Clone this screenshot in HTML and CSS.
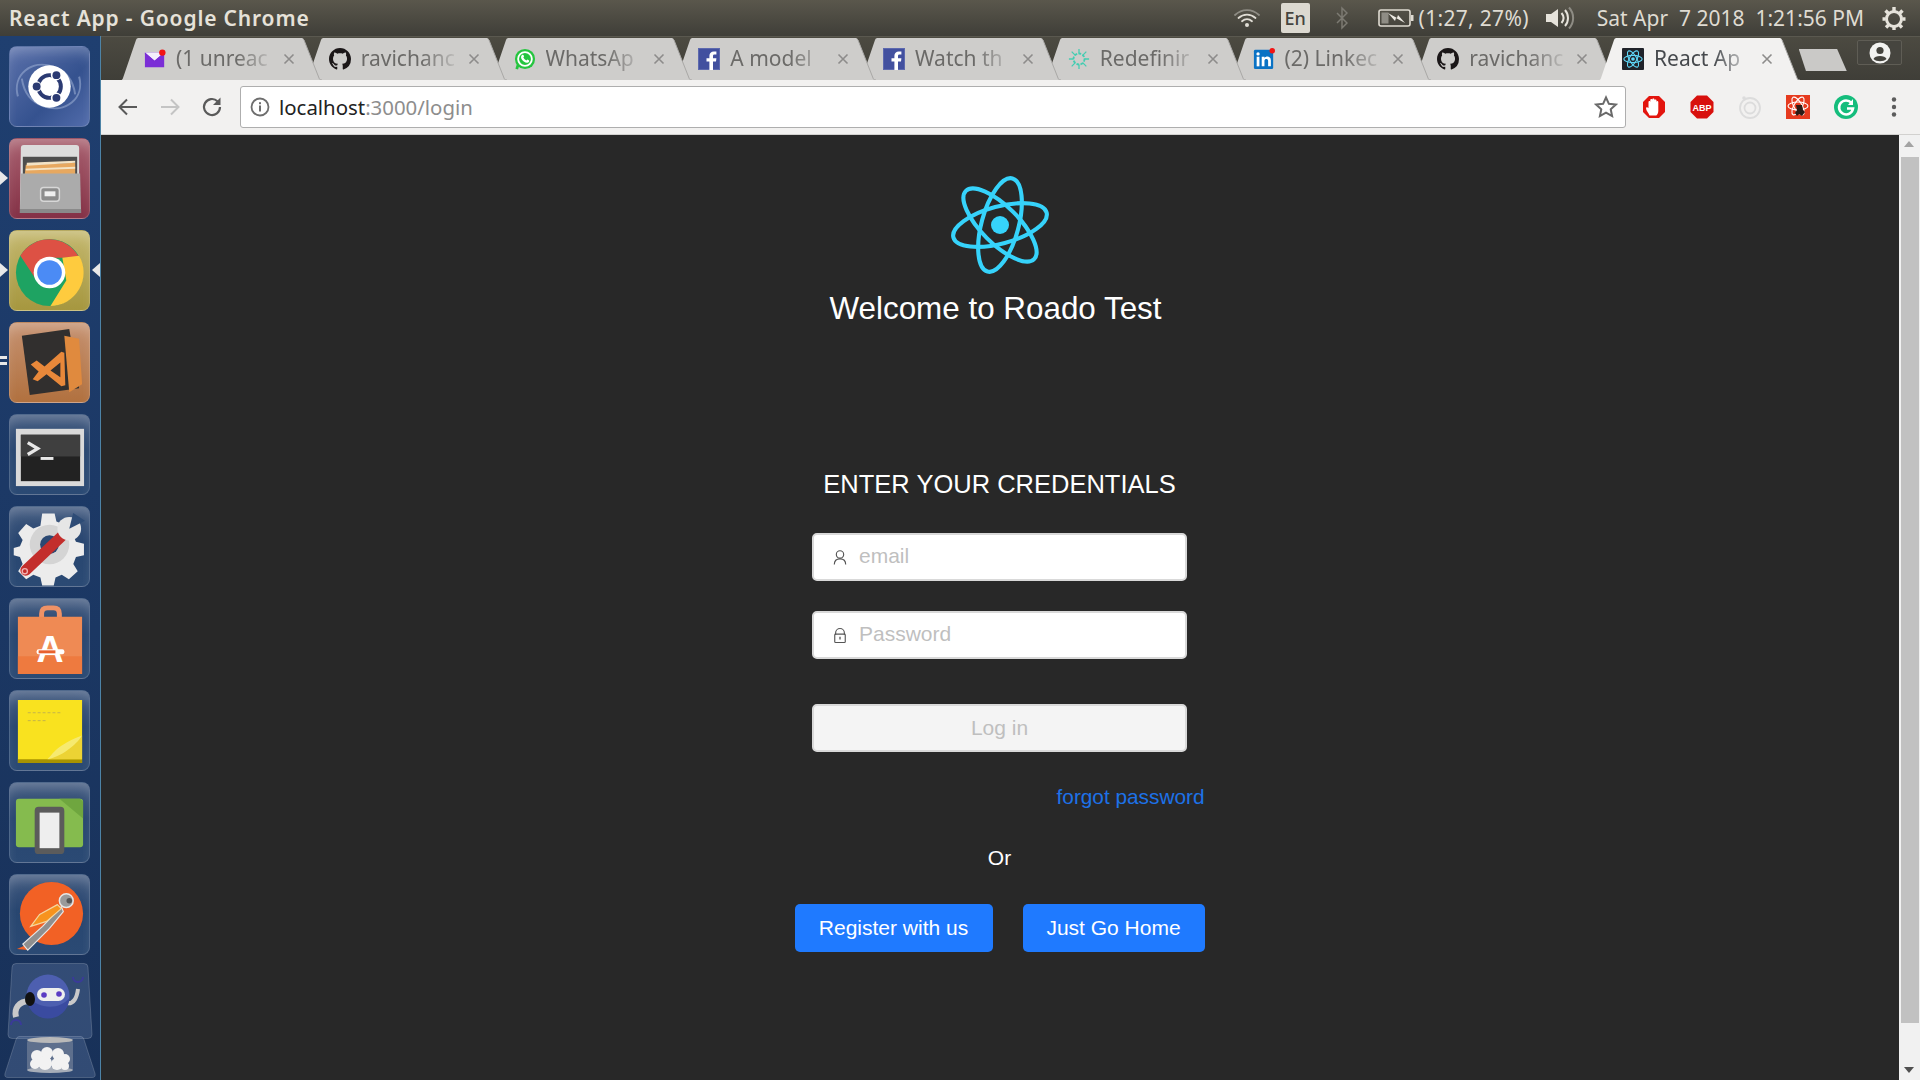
FILE: index.html
```html
<!DOCTYPE html>
<html lang="en">
<head>
<meta charset="utf-8">
<title>React App</title>
<link rel="stylesheet" href="styles.css">
</head>
<body>
<svg class="defs" width="0" height="0">
  <defs>
    <symbol id="i-gh" viewBox="0 0 16 16"><path fill="#1b1718" d="M8 0C3.58 0 0 3.58 0 8c0 3.54 2.29 6.53 5.47 7.59.4.07.55-.17.55-.38 0-.19-.01-.82-.01-1.49-2.01.37-2.53-.49-2.69-.94-.09-.23-.48-.94-.82-1.13-.28-.15-.68-.52-.01-.53.63-.01 1.08.58 1.23.82.72 1.21 1.87.87 2.33.66.07-.52.28-.87.51-1.07-1.78-.2-3.64-.89-3.64-3.95 0-.87.31-1.59.82-2.15-.08-.2-.36-1.02.08-2.12 0 0 .67-.21 2.2.82.64-.18 1.32-.27 2-.27.68 0 1.36.09 2 .27 1.53-1.04 2.2-.82 2.2-.82.44 1.1.16 1.92.08 2.12.51.56.82 1.27.82 2.15 0 3.07-1.87 3.75-3.65 3.95.29.25.54.73.54 1.48 0 1.07-.01 1.93-.01 2.2 0 .21.15.46.55.38A8.013 8.013 0 0016 8c0-4.42-3.58-8-8-8z"/></symbol>
    <symbol id="i-fb" viewBox="0 0 22 22"><rect width="22" height="22" fill="#42509f"/><rect x=".5" y=".5" width="21" height="21" fill="none" stroke="#5d69ae"/><path fill="#fff" d="M15 22v-8.500h3l.4-3.300H15V8.100c0-1 .3-1.600 1.600-1.600h1.800V3.500c-.4 0-1.400-.1-2.600-.1-2.600 0-4.400 1.600-4.400 4.400v2.400H8.500v3.300h2.900V22z"/></symbol>
    <symbol id="i-close" viewBox="0 0 12 12"><path d="M1.500 1.500l9 9M10.500 1.500l-9 9" fill="none" stroke="#8d8c8b" stroke-width="1.600"/></symbol>
    <symbol id="i-tab" viewBox="0 0 204 42" preserveAspectRatio="none"><path d="M0 42h3c1 0 1.500-.5 2-2L18 2c.5-1.200 1-2 2.500-2h163c1.500 0 2 .8 2.500 2l15 38c.5 1.500 1 2 2 2h1z" fill="currentColor"/><path d="M186 2l15 38c.5 1.500 1 2 3 2" fill="none" stroke="#a9a8a6"/></symbol>
  </defs>
</svg>

<header class="topbar">
  <div class="window-title">React App - Google Chrome</div>
  <div class="indicators">
    <svg class="ind-wifi" width="26" height="20" viewBox="0 0 26 20"><g fill="none" stroke-linecap="round"><path d="M1 7c7-6.500 17-6.500 24 0" stroke="#8e8c84" stroke-width="1.800"/><path d="M4.500 10c5-4.500 12-4.500 17 0" stroke="#e0ddd5" stroke-width="1.800"/><path d="M8 13.200c3-2.600 7-2.600 10 0" stroke="#e0ddd5" stroke-width="1.800"/></g><circle cx="13" cy="17" r="2" fill="#e0ddd5"/></svg>
    <div class="ind-lang">En</div>
    <svg class="ind-bt" width="12" height="24" viewBox="0 0 12 24"><path d="M1 7l10 10-5 5V2l5 5L1 17" fill="none" stroke="#7c7a72" stroke-width="1.500"/></svg>
    <div class="ind-battery">
      <svg width="36" height="20" viewBox="0 0 36 20"><rect x="1" y="2" width="31" height="16" rx="2" fill="none" stroke="#dfdbd2" stroke-width="1.600"/><rect x="33" y="7" width="2.500" height="6" fill="#dfdbd2"/><rect x="3.500" y="4.500" width="7" height="11" fill="#8f8d85"/><path d="M10 5l9 5 1-3 7 8-9-5-1 3z" fill="#eeebe4"/></svg>
      <span class="battery-text">(1:27, 27%)</span>
    </div>
    <svg class="ind-vol" width="30" height="24" viewBox="0 0 30 24"><path d="M1 8h5l7-5v18l-7-5H1z" fill="#e6e3db"/><g fill="none" stroke-width="2"><path d="M16.500 7c2.500 3 2.500 7 0 10" stroke="#e6e3db"/><path d="M20 4c4 4.500 4 11.500 0 16" stroke="#e6e3db"/><path d="M24 1.500c5.500 6 5.500 15 0 21" stroke="#8e8c84"/></g></svg>
    <div class="ind-clock">Sat Apr&nbsp; 7 2018&nbsp; 1:21:56 PM</div>
    <svg class="ind-gear" width="26" height="26" viewBox="0 0 26 26"><g fill="none" stroke="#e6e3db"><circle cx="13" cy="14" r="7.500" stroke-width="3"/><path d="M13 2v5M4.500 5.500l3 3M21.500 5.500l-3 3M1.500 14h3M21.500 14h3M5 22.500l2.500-2.500M21 22.500L18.500 20M13 22v3" stroke-width="3.400"/></g></svg>
  </div>
</header>

<div class="desktop">
  <nav class="launcher">
    <div class="tile tile-dash">
      <svg viewBox="0 0 80 80"><g fill="none" stroke="#9fb0d6" stroke-opacity=".55" stroke-width="2"><path d="M8 50c-6-22 14-38 36-30 12 4 20 14 22 28"/><path d="M70 30c6 22-14 38-36 30-12-4-20-14-22-28"/></g><circle cx="40" cy="40" r="21.500" fill="#fff"/><circle cx="40" cy="40" r="11.500" fill="none" stroke="#2b3a72" stroke-width="4"/><circle cx="26.500" cy="40" r="5.500" fill="#fff"/><circle cx="46.800" cy="28.300" r="5.500" fill="#fff"/><circle cx="46.800" cy="51.700" r="5.500" fill="#fff"/><circle cx="27" cy="40" r="4" fill="#2b3a72"/><circle cx="47" cy="28.500" r="4" fill="#2b3a72"/><circle cx="47" cy="51.500" r="4" fill="#2b3a72"/></svg>
    </div>
    <div class="tile tile-files">
      <svg viewBox="0 0 80 80"><path d="M11 9q0-3 3-3h53q3 0 3 3v62H10z" fill="#dcdcdc"/><rect x="13" y="18" width="55" height="20" fill="#4d4d4d"/><path d="M16 26l50-2v12H15z" fill="#e7a860"/><path d="M17 24l49-2v2l-49 3zM16 30l50-2v2l-50 2z" fill="#f3e3c5"/><path d="M11 35h60l1 40H10z" fill="#ababab"/><path d="M10 71h62v4H10z" fill="#8a8a8a"/><rect x="31" y="49" width="19" height="14" rx="3" fill="#8c8c8c" stroke="#d7d7d7" stroke-width="1.500"/><rect x="35" y="53" width="11" height="5" fill="#efefef"/></svg>
    </div>
    <div class="tile tile-chrome">
      <svg viewBox="0 0 80 80"><circle cx="40" cy="42" r="34" fill="#1ea362"/><path d="M10.500 25A34 34 0 0 1 70 27L40 27 27 50z" fill="#dd5144"/><path d="M70 25a34 34 0 0 1-29 51l16-26-4-23z" fill="#fecb3e"/><circle cx="40" cy="42" r="16" fill="#fff"/><circle cx="40" cy="42" r="12.500" fill="#4b8bf5"/></svg>
    </div>
    <div class="tile tile-code">
      <svg viewBox="0 0 80 80"><path d="M12 13l48-7 10 60-50 7z" fill="#312f2e"/><path d="M55 13l15 3 3 46-13 8z" fill="#e08a3e"/><path d="M21 42l6-4 8 6 17-15 3 1 1 33-4 1-15-12-9 7-5-2 6-8zm30-2l-10 8 10 7z" fill="#e8883a"/></svg>
    </div>
    <div class="tile tile-glass">
      <svg viewBox="0 0 80 80"><rect x="6" y="14" width="69" height="58" fill="#dadada"/><rect x="11" y="20" width="60" height="47" fill="#222"/><rect x="11" y="20" width="60" height="22" fill="#3f3f3f"/><path d="M18 28l10 6-10 6" fill="none" stroke="#e8e8e8" stroke-width="3.400"/><path d="M31 44h13" stroke="#e8e8e8" stroke-width="3"/></svg>
    </div>
    <div class="tile tile-glass">
      <svg viewBox="0 0 80 80"><path d="M34 5h14l2 9 7 3 8-5 9 10-5 8 3 7 9 2v13l-9 2-3 8 5 8-10 9-8-5-7 3-2 9H34l-2-9-8-3-8 5-9-9 5-8-3-8-7-2V44l7-2 3-7-5-8 9-10 8 5 8-3z" fill="#ececec" transform="translate(2 2) scale(.9)"/><circle cx="40" cy="38" r="20" fill="#d4d4d4"/><circle cx="40" cy="38" r="9.500" fill="#2a4872"/><path d="M16 64L52 30" stroke="#c32e2c" stroke-width="11" stroke-linecap="round"/><circle cx="15" cy="65" r="2.600" fill="none" stroke="#f0b0b0" stroke-width="1.400"/><circle cx="60" cy="22" r="12" fill="#e6e6e6"/><path d="M60 22l4-16 12 8z" fill="#2e4c76"/></svg>
    </div>
    <div class="tile tile-glass">
      <svg viewBox="0 0 80 80"><path d="M32 22v-7q0-6 6-6h6q6 0 6 6v7" fill="none" stroke="#ef9266" stroke-width="5"/><path d="M8 18h65v58H8z" fill="#ef8a54"/><path d="M8 58h65v18H8z" fill="#ee7a3f"/><text x="40.500" y="64" class="bag-a">A</text><rect x="27" y="51" width="28" height="5" rx="2" fill="#fff"/><rect x="29" y="52" width="17" height="3" fill="#e8622f"/></svg>
    </div>
    <div class="tile tile-glass">
      <svg viewBox="0 0 80 80"><path d="M8 9h65v64H8z" fill="#f9e21f"/><path d="M8 69h65v4H8z" fill="#a89300"/><path d="M38 69c12-2 28-14 35-24v24z" fill="#ecd334"/><path d="M38 69c6-6 9-14 35-24-6 10-22 22-35 24z" fill="#f6ea70"/><path d="M18 22h34M18 30h18" stroke="#c4b44a" stroke-width="1" stroke-dasharray="3 2"/></svg>
    </div>
    <div class="tile tile-glass">
      <svg viewBox="0 0 80 80"><rect x="6" y="16" width="68" height="49" rx="3" fill="#85bb4e"/><path d="M50 16h21l3 3v17z" fill="#6fa63f"/><rect x="25" y="24" width="30" height="48" rx="4" fill="#5b5b5b"/><rect x="30" y="30" width="20" height="36" fill="#eeeeee"/></svg>
    </div>
    <div class="tile tile-glass">
      <svg viewBox="0 0 80 80"><circle cx="42" cy="39" r="32" fill="#f26125"/><path d="M7 75l11-5v6z" fill="#f26125"/><path d="M52 32L33 52 13 70l5 6 22-22 14-17z" fill="#8f8f8f" stroke="#e6e6e6" stroke-width="1.200"/><path d="M48 30L30 40 21 52l16-5 15-13z" fill="#f7931e" stroke="#f4d6a0" stroke-width="1.200"/><circle cx="57" cy="26" r="7" fill="#9a9a9a" stroke="#e6e6e6" stroke-width="1.500"/><circle cx="60" cy="26" r="2.800" fill="#555"/></svg>
    </div>
    <div class="tile tile-robo">
      <svg viewBox="0 0 84 76"><path d="M8 .5h68q4 0 4 4l4 67q0 4-4 4H4q-4 0-4-4l4-67q0-4 4-4z" class="robo-frame"/><path d="M22 38C10 38 6 46 8 54" fill="none" stroke="#c9c9c9" stroke-width="6"/><path d="M58 40c8 2 11-6 12-14" fill="none" stroke="#c9c9c9" stroke-width="4"/><circle cx="40" cy="33" r="21.500" fill="#4d5fb0"/><path d="M18.500 33a21.500 21.500 0 0 0 43 2c-10 12-30 12-43-2z" fill="#3a4ba0"/><rect x="29" y="25" width="28" height="13" rx="6.500" fill="#eeeeee"/><circle cx="36" cy="32" r="2.800" fill="#5b3cc4"/><circle cx="51" cy="31" r="2.800" fill="#5b3cc4"/><ellipse cx="22" cy="36" rx="5" ry="7" fill="#111"/><path d="M65 14a5 5 0 0 0 10 0M3 62a5 5 0 0 1 10 0" fill="none" stroke="#3a3a9a" stroke-width="2"/></svg>
    </div>
    <div class="tile tile-trash">
      <svg viewBox="0 0 90 42"><path d="M14 .5h62q2 0 3 3l11 34q1 4-3 4H3q-4 0-3-4l11-34q1-3 3-3z" class="robo-frame"/><rect x="22" y="4" width="46" height="31" rx="3" fill="#8a94a6" fill-opacity=".5"/><ellipse cx="45" cy="4" rx="23" ry="3" fill="#b9b9b9"/><ellipse cx="45" cy="34" rx="23" ry="3" fill="#a6adb8"/><g fill="#f2f2f2"><circle cx="32" cy="20" r="6"/><circle cx="42" cy="17" r="6"/><circle cx="53" cy="18" r="6"/><circle cx="60" cy="23" r="5"/><circle cx="30" cy="28" r="5"/><circle cx="40" cy="27" r="7"/><circle cx="52" cy="28" r="6"/><circle cx="60" cy="30" r="4"/></g></svg>
    </div>
    <span class="pip pip-left pip-files"></span>
    <span class="pip pip-left pip-chrome"></span>
    <span class="pip pip-right pip-chrome"></span>
    <span class="pip-double"></span>
  </nav>

  <div class="browser">
    <div class="tabstrip">
      <div class="tab">
        <svg class="tab-shape"><use href="#i-tab"/></svg>
        <svg class="fav" viewBox="0 0 24 24"><rect x="1" y="5" width="21" height="16" fill="#7b2ed6"/><path d="M1 5l10.500 9L22 5z" fill="#f4eefc"/><path d="M1 5v2l10.500 9L22 7V5L11.500 14z" fill="#7b2ed6"/><circle cx="20" cy="5" r="3.500" fill="#f21414"/></svg>
        <span class="tab-title">(1 unreac</span>
        <svg class="tab-close"><use href="#i-close"/></svg>
      </div>
      <div class="tab">
        <svg class="tab-shape"><use href="#i-tab"/></svg>
        <svg class="fav"><use href="#i-gh"/></svg>
        <span class="tab-title">ravichanc</span>
        <svg class="tab-close"><use href="#i-close"/></svg>
      </div>
      <div class="tab">
        <svg class="tab-shape"><use href="#i-tab"/></svg>
        <svg class="fav" viewBox="0 0 24 24"><circle cx="12" cy="12" r="11" fill="#25c53f"/><path d="M3 23l2-6.500" stroke="#25c53f" stroke-width="3"/><circle cx="12" cy="12" r="7.500" fill="none" stroke="#fff" stroke-width="2"/><path d="M8.500 8c1-1 1.800-.5 2.500 1l-.8 1.300c.7 1.500 1.800 2.600 3.300 3.300l1.200-1c1.500.5 2.300 1.300 1.700 2.500-1.200 1.700-3.500 1.200-5.700-.3-2.500-1.800-4-4.800-2.200-6.800z" fill="#fff"/></svg>
        <span class="tab-title">WhatsAp</span>
        <svg class="tab-close"><use href="#i-close"/></svg>
      </div>
      <div class="tab">
        <svg class="tab-shape"><use href="#i-tab"/></svg>
        <svg class="fav"><use href="#i-fb"/></svg>
        <span class="tab-title">A model</span>
        <svg class="tab-close"><use href="#i-close"/></svg>
      </div>
      <div class="tab">
        <svg class="tab-shape"><use href="#i-tab"/></svg>
        <svg class="fav"><use href="#i-fb"/></svg>
        <span class="tab-title">Watch th</span>
        <svg class="tab-close"><use href="#i-close"/></svg>
      </div>
      <div class="tab">
        <svg class="tab-shape"><use href="#i-tab"/></svg>
        <svg class="fav" viewBox="0 0 24 24"><g fill="none" stroke="#45cdb2" stroke-width="2"><circle cx="12" cy="12" r="6" stroke-dasharray="3 1.500"/><path d="M12 1v5M12 18v5M1 12h5M18 12h5M4 4l4 4M16 16l4 4M20 4l-4 4M8 16l-4 4" stroke-width="1.400"/></g></svg>
        <span class="tab-title">Redefinir</span>
        <svg class="tab-close"><use href="#i-close"/></svg>
      </div>
      <div class="tab">
        <svg class="tab-shape"><use href="#i-tab"/></svg>
        <svg class="fav" viewBox="0 0 24 24"><rect x="1" y="2" width="21" height="21" rx="1.500" fill="#0a72c4"/><rect x="4" y="9.500" width="3" height="10.500" fill="#fff"/><circle cx="5.500" cy="6.500" r="1.800" fill="#fff"/><path d="M9.500 9.500h3v1.500c1.500-2.500 7-2.500 7 2.500v6.500h-3v-6c0-2.500-4-2.500-4 0v6h-3z" fill="#fff"/><circle cx="21" cy="3" r="3" fill="#f21414"/></svg>
        <span class="tab-title">(2) Linkec</span>
        <svg class="tab-close"><use href="#i-close"/></svg>
      </div>
      <div class="tab">
        <svg class="tab-shape"><use href="#i-tab"/></svg>
        <svg class="fav"><use href="#i-gh"/></svg>
        <span class="tab-title">ravichanc</span>
        <svg class="tab-close"><use href="#i-close"/></svg>
      </div>
      <div class="tab tab-active">
        <svg class="tab-shape"><use href="#i-tab"/></svg>
        <svg class="fav" viewBox="0 0 24 24"><rect width="24" height="24" rx="1" fill="#20232a"/><g fill="none" stroke="#5fd6f7" stroke-width="1.200"><ellipse cx="12" cy="12" rx="10" ry="4"/><ellipse cx="12" cy="12" rx="10" ry="4" transform="rotate(60 12 12)"/><ellipse cx="12" cy="12" rx="10" ry="4" transform="rotate(120 12 12)"/></g><circle cx="12" cy="12" r="2" fill="#5fd6f7"/></svg>
        <span class="tab-title">React Ap</span>
        <svg class="tab-close"><use href="#i-close"/></svg>
      </div>
      <div class="newtab"></div>
      <div class="profile">
        <svg width="22" height="22" viewBox="0 0 22 22"><circle cx="11" cy="11" r="10.500" fill="#f3f3f1"/><circle cx="11" cy="8.500" r="3.600" fill="#45443e"/><path d="M4.500 17c1-4 12-4 13 0-3 3-10 3-13 0z" fill="#45443e"/></svg>
      </div>
    </div>

    <div class="toolbar">
      <svg class="nav-ico" viewBox="0 0 24 24"><path d="M21 12H4M11 4.500L3.500 12l7.500 7.500" fill="none" stroke="#5a5a5a" stroke-width="2"/></svg>
      <svg class="nav-ico" viewBox="0 0 24 24"><path d="M3 12h17M13 4.500l7.500 7.500-7.500 7.500" fill="none" stroke="#c4c4c4" stroke-width="2"/></svg>
      <svg class="nav-ico" viewBox="0 0 24 24"><path d="M20 12a8 8 0 1 1-2.500-5.800" fill="none" stroke="#5a5a5a" stroke-width="2.200"/><path d="M20.500 2.500v7.500H13z" fill="#5a5a5a"/></svg>
      <div class="omnibox">
        <svg class="info" viewBox="0 0 20 20"><circle cx="10" cy="10" r="8.500" fill="none" stroke="#6e6e6e" stroke-width="1.800"/><rect x="9" y="8.500" width="2" height="6" fill="#6e6e6e"/><rect x="9" y="5.200" width="2" height="2" fill="#6e6e6e"/></svg>
        <div class="url"><span class="url-host">localhost</span>:3000/login</div>
        <svg class="star" viewBox="0 0 24 24"><path d="M12 2.500l2.900 6.300 6.900.8-5.100 4.700 1.400 6.800-6.100-3.400-6.100 3.400 1.400-6.800L2.200 9.600l6.900-.8z" fill="none" stroke="#6a6a6a" stroke-width="2"/></svg>
      </div>
      <div class="extensions">
        <svg class="ext" viewBox="0 0 24 24"><path d="M7 1h10l6 6v10l-6 6H7l-6-6V7z" fill="#e3150e"/><path d="M7.500 20.500c-1-3-3.500-4.500-3.500-7.500 0-1 1.500-1.200 2.500 0V7c0-1.500 1.800-1.500 1.800 0V5c0-1.500 2-1.500 2 0V4.500c0-1.300 2.200-1.300 2.200 0V5.500c0-1.300 2-1.300 2 0V7c0-1.200 1.800-1.200 1.800 0v9c0 2-1 3.500-2 4.500z" fill="#fff"/></svg>
        <svg class="ext" viewBox="0 0 24 24"><path d="M7 .5h10L23.500 7v10L17 23.500H7L.5 17V7z" fill="#d8100d"/><text x="12" y="15.500" class="abp">ABP</text></svg>
        <svg class="ext" viewBox="0 0 24 24"><g fill="none" stroke="#dcdcdc" stroke-width="1.800"><circle cx="12" cy="13" r="10"/><circle cx="12" cy="13" r="5.500"/></g><circle cx="6" cy="3" r="1.800" fill="#dcdcdc"/></svg>
        <svg class="ext" viewBox="0 0 24 24"><rect width="24" height="24" fill="#e63a1e"/><g fill="none" stroke="#fff" stroke-width="1.100"><ellipse cx="12" cy="11" rx="10" ry="4"/><ellipse cx="12" cy="11" rx="10" ry="4" transform="rotate(60 12 11)"/><ellipse cx="12" cy="11" rx="10" ry="4" transform="rotate(120 12 11)"/></g><path d="M10 10h6l1 5 2 2-3 4-3-2-2 2-2-3 2-3z" fill="#2a1b16"/></svg>
        <svg class="ext" viewBox="0 0 24 24"><circle cx="12" cy="12" r="12" fill="#15bd7c"/><path d="M17.500 8A7 7 0 1 0 19 13.500h-6" fill="none" stroke="#fff" stroke-width="2.600"/><path d="M19 4v6h-5z" fill="#fff"/></svg>
        <svg class="ext" viewBox="0 0 24 24"><circle cx="12" cy="4.500" r="2.200" fill="#5c5c5c"/><circle cx="12" cy="12" r="2.200" fill="#5c5c5c"/><circle cx="12" cy="19.500" r="2.200" fill="#5c5c5c"/></svg>
      </div>
    </div>

    <div class="viewport">
      <main class="page">
        <svg class="logo" viewBox="-50 -50 100 100"><g fill="none" stroke="#36d3fb" stroke-width="3.900"><ellipse rx="45.500" ry="17.500" transform="rotate(-15)"/><ellipse rx="45.500" ry="17.500" transform="rotate(45)"/><ellipse rx="45.500" ry="17.500" transform="rotate(105)"/></g><circle r="8.500" fill="#36d3fb"/></svg>
        <h1 class="welcome">Welcome to Roado Test</h1>
        <h2 class="credentials">ENTER YOUR CREDENTIALS</h2>
        <div class="field field-email">
          <svg class="field-ico" viewBox="0 0 16 18"><circle cx="8" cy="5.500" r="4.200" fill="none" stroke="#555" stroke-width="1.300"/><path d="M1.500 17c0-4 2.500-6.500 6.500-6.500s6.500 2.500 6.500 6.500" fill="none" stroke="#555" stroke-width="1.300"/></svg>
          <span class="placeholder">email</span>
        </div>
        <div class="field field-pass">
          <svg class="field-ico" viewBox="0 0 16 18"><path d="M3 8V6a5 5 0 0 1 10 0v2" fill="none" stroke="#555" stroke-width="1.300"/><rect x="2" y="7.500" width="12" height="9.500" rx="1" fill="none" stroke="#555" stroke-width="1.300"/><path d="M8 10.500v3" stroke="#555" stroke-width="1.500"/></svg>
          <span class="placeholder">Password</span>
        </div>
        <button class="login" disabled>Log in</button>
        <a class="forgot" href="#">forgot password</a>
        <div class="or">Or</div>
        <div class="actions">
          <button class="primary primary-register">Register with us</button>
          <button class="primary primary-home">Just Go Home</button>
        </div>
      </main>
      <div class="scrollbar">
        <span class="arrow arrow-up"></span>
        <div class="thumb"></div>
        <span class="arrow arrow-down"></span>
      </div>
    </div>
  </div>
</div>
</body>
</html>
```

FILE: styles.css
```css
* { box-sizing: border-box; }
html, body { margin: 0; height: 100%; overflow: hidden; }
body {
  width: 1920px;
  height: 1080px;
  display: flex;
  flex-direction: column;
  background: #282828;
  font-family: "Liberation Sans", Arial, sans-serif;
}
.defs { position: absolute; }

/* top panel */
.topbar {
  height: 36px;
  flex: none;
  display: flex;
  align-items: center;
  justify-content: space-between;
  padding-left: 9px;
  background: linear-gradient(#5a574c, #3f3e38);
  color: #e2ded5;
  font-family: "Noto Sans", sans-serif;
}
.window-title { font-size: 21px; font-weight: 600; color: #e6e2d9; letter-spacing: .84px; }
.indicators { display: flex; align-items: center; height: 36px; font-size: 21px; color: #dfdbd2; }
.ind-wifi { margin-right: 21px; }
.ind-lang {
  width: 29px; height: 30px; border-radius: 2px;
  background: #dcd9d0; color: #45443e;
  display: flex; align-items: center; justify-content: center;
  font-size: 18px; font-weight: 500;
}
.ind-bt { margin-left: 26px; margin-right: 30px; }
.ind-battery { display: flex; align-items: center; gap: 5px; }
.battery-text { letter-spacing: .3px; }
.ind-vol { margin-left: 16px; }
.ind-clock { margin-left: 22px; white-space: nowrap; }
.ind-gear { margin-left: 17px; margin-right: 13px; }

/* launcher */
.desktop { flex: 1; display: flex; min-height: 0; }
.launcher {
  position: relative;
  width: 101px;
  flex: none;
  display: flex;
  flex-direction: column;
  align-items: center;
  padding: 10px 1px 0 0;
  gap: 11px;
  overflow: hidden;
  background: linear-gradient(#1f3f70, #183159);
  border-right: 1px solid #4d83a6;
}
.tile {
  width: 81px; height: 81px; flex: none;
  border-radius: 8px;
  border: 1px solid rgba(255,255,255,.18);
  box-shadow: inset 0 10px 14px -6px rgba(255,255,255,.28);
}
.tile svg { display: block; width: 100%; height: 100%; overflow: visible; }
.tile-dash { background: linear-gradient(135deg, #5a70aa, #35528f 60%, #526cab); }
.tile-files { background: linear-gradient(#a8606f, #843146); }
.tile-chrome { background: linear-gradient(#c3b76d, #a6973f); }
.tile-code { background: linear-gradient(#c59170, #b1713f); }
.tile-glass { background: linear-gradient(#41597f, #284670 45%, #2b4a74); }
.tile-robo, .tile-trash { background: none; border: 0; box-shadow: none; }
.tile-robo { width: 84px; height: 76px; margin-top: -3px; }
.tile-trash { width: 90px; height: 42px; margin-top: -14px; }
.robo-frame { fill: rgba(120,145,185,.28); stroke: rgba(255,255,255,.18); }
.bag-a { font: 700 38px "Liberation Sans", sans-serif; fill: #fff; text-anchor: middle; }
.pip { position: absolute; width: 0; height: 0; border-top: 7px solid transparent; border-bottom: 7px solid transparent; }
.pip-left { left: 0; border-left: 8px solid #e8e8e8; }
.pip-right { right: 0; border-right: 8px solid #e8e8e8; }
.pip-files { top: 135px; }
.pip-chrome { top: 227px; }
.pip-double {
  position: absolute; left: 0; top: 320px; width: 7px; height: 9px;
  border-top: 3px solid #e8e8e8; border-bottom: 3px solid #e8e8e8;
}

/* chrome */
.browser { flex: 1; min-width: 0; display: flex; flex-direction: column; }
.tabstrip {
  height: 44px; flex: none;
  display: flex;
  align-items: flex-end;
  padding-left: 17px;
  position: relative;
  background: linear-gradient(#4c4a41, #3f3e38);
  border-top: 1px solid #5a584f;
  font-family: "Noto Sans", sans-serif;
}
.tab {
  position: relative;
  width: 204px; height: 42px; flex: none;
  margin-right: -19.250px;
  display: flex;
  align-items: center;
  padding-left: 26px;
  color: #cecdcb;
}
.tab:nth-child(1) { z-index: 9; } .tab:nth-child(2) { z-index: 8; }
.tab:nth-child(3) { z-index: 7; } .tab:nth-child(4) { z-index: 6; }
.tab:nth-child(5) { z-index: 5; } .tab:nth-child(6) { z-index: 4; }
.tab:nth-child(7) { z-index: 3; } .tab:nth-child(8) { z-index: 2; }
.tab-active { z-index: 10 !important; color: #f2f1f0; }
.tab-shape { position: absolute; inset: 0; width: 100%; height: 100%; }
.fav { position: relative; width: 22px; height: 22px; flex: none; }
.tab-title {
  position: relative;
  width: 96px;
  margin: -2px 0 0 10px;
  white-space: nowrap;
  font-size: 21px;
  color: #6b6a68;
  -webkit-mask-image: linear-gradient(90deg, #000 62%, rgba(0,0,0,.12));
  mask-image: linear-gradient(90deg, #000 62%, rgba(0,0,0,.12));
}
.tab-active .tab-title { color: #46494d; }
.tab-close { position: relative; width: 12px; height: 12px; margin-left: 11px; flex: none; }
.newtab {
  width: 48px; height: 22px; flex: none;
  margin: 0 0 9px 18px;
  background: #cac9c7;
  clip-path: polygon(0 0, 80% 0, 100% 100%, 15% 100%);
  position: relative; z-index: 1;
}
.profile {
  position: absolute; left: 1756px; top: 3px;
  width: 45px; height: 25px;
  display: flex; align-items: center; justify-content: center;
  border: 1px solid #5f5d55; border-radius: 2px;
  background: #46453f;
}
.toolbar {
  height: 55px; flex: none;
  display: flex;
  align-items: center;
  padding-left: 15px;
  background: #f2f1f0;
  border-bottom: 1px solid #d2d1cf;
}
.nav-ico { width: 24px; height: 24px; flex: none; margin-right: 18px; }
.nav-ico:nth-child(3) { margin-right: 15px; }
.omnibox {
  width: 1386px; height: 42px; flex: none;
  display: flex; align-items: center;
  padding: 0 7px 0 9px;
  background: #fff;
  border: 1px solid #aeaeae;
  border-radius: 3px;
  margin-left: 1px;
}
.info { width: 20px; height: 20px; flex: none; }
.url { flex: 1; margin-left: 9px; font: 20.400px "Noto Sans", sans-serif; color: #8d8d8d; white-space: nowrap; }
.url-host { color: #222; }
.star { width: 24px; height: 24px; flex: none; }
.extensions { display: flex; margin-left: 16px; gap: 24px; }
.ext { width: 24px; height: 24px; flex: none; }
.abp { font: 700 9px "Liberation Sans", sans-serif; fill: #fff; text-anchor: middle; }

/* page */
.viewport { flex: 1; display: flex; min-height: 0; }
.page {
  flex: 1;
  display: flex;
  flex-direction: column;
  align-items: center;
  padding: 37px 1px 0 0;
  background: #282828;
  color: #fff;
}
.logo { width: 106px; height: 106px; flex: none; }
.welcome { margin: 12px 8px 0 0; font-size: 31.400px; line-height: 37px; font-weight: 400; }
.credentials { margin: 142px 0 0; font-size: 25.500px; line-height: 30px; font-weight: 400; }
.field {
  width: 375px; height: 48px; flex: none;
  display: flex; align-items: center;
  padding-left: 19px;
  background: #fff;
  border: 2px solid #d9d9d9;
  border-radius: 5px;
  font-size: 21px;
}
.field-email { margin-top: 34px; }
.field-pass { margin-top: 30px; }
.field-ico { width: 14px; height: 17px; flex: none; margin-right: 12px; }
.placeholder { color: #bfbfbf; margin-top: -2px; }
.login {
  width: 375px; height: 48px; flex: none;
  margin-top: 45px;
  background: #f4f4f4;
  border: 2px solid #d9d9d9;
  border-radius: 5px;
  color: #bfbfbf;
  font: 21px "Liberation Sans", sans-serif;
}
.forgot {
  width: 410px;
  margin-top: 33px;
  text-align: right;
  font-size: 20.800px;
  line-height: 24px;
  color: #1d72e8;
  text-decoration: none;
}
.or { margin-top: 37px; font-size: 21px; line-height: 24px; }
.actions { width: 410px; margin-top: 34px; display: flex; justify-content: space-between; }
.primary {
  height: 48px;
  border: 0;
  border-radius: 5px;
  background: #1f7aff;
  color: #fff;
  font: 21px "Liberation Sans", sans-serif;
}
.primary-register { width: 198px; }
.primary-home { width: 182px; }
.scrollbar {
  width: 21px; flex: none;
  position: relative;
  background: #f1f1f1;
  padding: 22px 1px 0 2px;
}
.thumb { height: 866px; background: #c1c1c1; }
.arrow { position: absolute; left: 5px; width: 0; height: 0; border-left: 5px solid transparent; border-right: 5px solid transparent; }
.arrow-up { top: 6px; border-bottom: 6px solid #a3a3a3; }
.arrow-down { bottom: 7px; border-top: 6px solid #505050; }
```
